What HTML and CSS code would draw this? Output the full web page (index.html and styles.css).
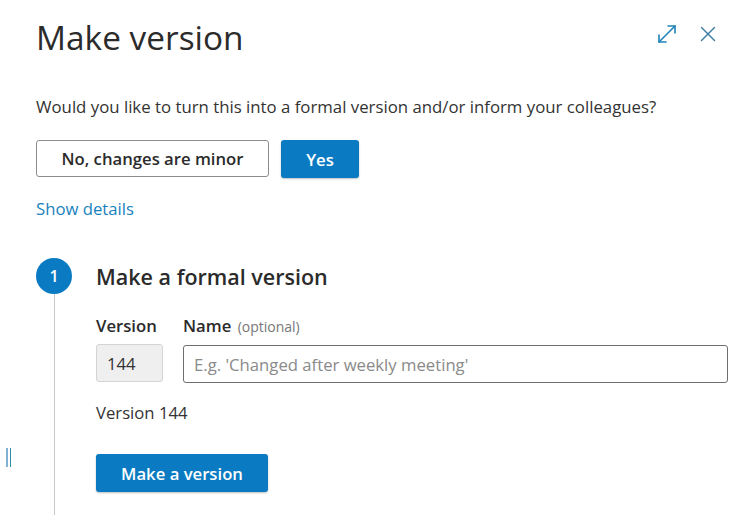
FILE: index.html
```html
<!DOCTYPE html>
<html>

<head>
	<title>Make version</title>
	<meta charset="utf-8">
	<meta name="viewport" content="width=device-width, initial-scale=1.0">
	<link rel="stylesheet" href="styles.css">
</head>

<body>
	<div class="handle"><span></span><span></span></div>

	<section class="dialog">
		<header class="top">
			<h1>Make version</h1>
			<div class="tools">
				<button class="ikon" title="Expand">
					<svg width="20" height="20" viewBox="0 0 20 20" fill="none" stroke="#1f82b8" stroke-width="1.6" stroke-linecap="round" stroke-linejoin="round">
						<path d="M2 18 L18 2" />
						<path d="M11 2 H18 V9" />
						<path d="M2 11 V18 H9" />
					</svg>
				</button>
				<button class="ikon" title="Close">
					<svg width="18" height="18" viewBox="0 0 18 18" fill="none" stroke="#3d7ea2" stroke-width="1.4" stroke-linecap="round">
						<path d="M2.5 2.5 L15.5 15.5" />
						<path d="M15.5 2.5 L2.5 15.5" />
					</svg>
				</button>
			</div>
		</header>

		<p class="spoerg">Would you like to turn this into a formal version and/or inform your colleagues?</p>

		<div class="valg">
			<button class="knap sekundaer">No, changes are minor</button>
			<button class="knap primaer">Yes</button>
		</div>

		<a class="detaljer" href="#">Show details</a>

		<div class="trin">
			<div class="spor">
				<span class="nummer">1</span>
				<span class="linje"></span>
			</div>
			<div class="trin-indhold">
				<h2>Make a formal version</h2>
				<div class="felter">
					<label class="felt">
						<span class="etiket">Version</span>
						<input class="nr" type="text" value="144" readonly>
					</label>
					<label class="felt navn">
						<span class="etiket">Name <small>(optional)</small></span>
						<input class="tekst" type="text" placeholder="E.g. 'Changed after weekly meeting'">
					</label>
				</div>
				<p class="status">Version 144</p>
				<button class="knap primaer bred">Make a version</button>
			</div>
		</div>
	</section>
</body>

</html>
```

FILE: styles.css
```css
body {
	margin: 0;
	padding: 0;
	background: #fff;
	font-family: "Open Sans", "Noto Sans", sans-serif;
	color: #2b2b2b;
	height: 515px;
	overflow: hidden;
	position: relative;
}

.handle {
	position: absolute;
	left: 6px;
	top: 448px;
	display: flex;
	gap: 2px;
}

.handle span {
	width: 1.5px;
	height: 19px;
	background: #7fb0d6;
}

.handle span+span {
	background: #2a8a9e;
}

.dialog {
	padding: 0 11px 0 36px;
}

.top {
	display: flex;
	justify-content: space-between;
	align-items: flex-start;
}

h1 {
	font-size: 33.4px;
	font-weight: 400;
	line-height: 42px;
	margin: 16px 0 0;
	color: #2b2b2b;
}

.tools {
	display: flex;
	gap: 21px;
	margin-top: 24px;
	margin-right: 10px;
}

.ikon {
	border: none;
	background: none;
	padding: 0;
	width: 20px;
	height: 20px;
	display: flex;
	align-items: center;
	justify-content: center;
	cursor: pointer;
}

.spoerg {
	font-size: 16.8px;
	line-height: 24px;
	margin: 37px 0 0;
	color: #333;
}

.valg {
	display: flex;
	gap: 12px;
	margin-top: 21px;
}

.knap {
	font-family: "Open Sans", "Noto Sans", sans-serif;
	font-size: 16.7px;
	font-weight: 600;
	height: 38px;
	border-radius: 3px;
	padding: 0 24px;
	cursor: pointer;
}

.sekundaer {
	width: 233px;
	background: #fff;
	color: #2b2b2b;
	border: 1px solid #8c8c8c;
	height: 37px;
}

.primaer {
	background: #0a7bc2;
	color: #fff;
	border: none;
	box-shadow: 0 1px 2px rgba(0, 0, 0, 0.25);
}

.valg .primaer {
	width: 78px;
	padding: 0;
}

.detaljer {
	display: block;
	margin-top: 19px;
	font-size: 16.7px;
	line-height: 24px;
	color: #1a82bd;
	text-decoration: none;
}

.trin {
	display: flex;
	margin-top: 37px;
}

.spor {
	width: 36px;
	display: flex;
	flex-direction: column;
	align-items: center;
	margin-right: 24px;
}

.nummer {
	width: 36px;
	height: 36px;
	border-radius: 50%;
	background: #0a7bc2;
	color: #fff;
	font-size: 16px;
	font-weight: 600;
	display: flex;
	align-items: center;
	justify-content: center;
	flex-shrink: 0;
}

.linje {
	width: 1px;
	height: 240px;
	background: #c8c8c8;
}

.trin-indhold {
	flex: 1;
}

h2 {
	font-size: 21.5px;
	font-weight: 600;
	line-height: 30px;
	margin: 4px 0 0;
	color: #2b2b2b;
}

.felter {
	display: flex;
	gap: 20px;
	margin-top: 22px;
}

.felt {
	display: flex;
	flex-direction: column;
	gap: 6px;
}

.navn {
	flex: 1;
}

.etiket {
	font-size: 16.7px;
	font-weight: 600;
	line-height: 24px;
	color: #2b2b2b;
}

.etiket small {
	font-size: 14px;
	font-weight: 400;
	color: #777;
	margin-left: 2px;
}

input {
	font-family: "Open Sans", "Noto Sans", sans-serif;
	font-size: 16.7px;
	height: 38px;
	box-sizing: border-box;
	border-radius: 3px;
	padding: 0 10px;
	margin: 0;
}

.nr {
	width: 67px;
	background: #efefef;
	border: 1px solid #d4d4d4;
	color: #333;
}

.tekst {
	width: 100%;
	border: 1px solid #6e6e6e;
	color: #333;
}

.tekst::placeholder {
	color: #8a8a8a;
}

.status {
	font-size: 16.7px;
	line-height: 24px;
	margin: 18px 0 0;
	color: #333;
}

.bred {
	margin-top: 29px;
	width: 172px;
	padding: 0;
}
```
